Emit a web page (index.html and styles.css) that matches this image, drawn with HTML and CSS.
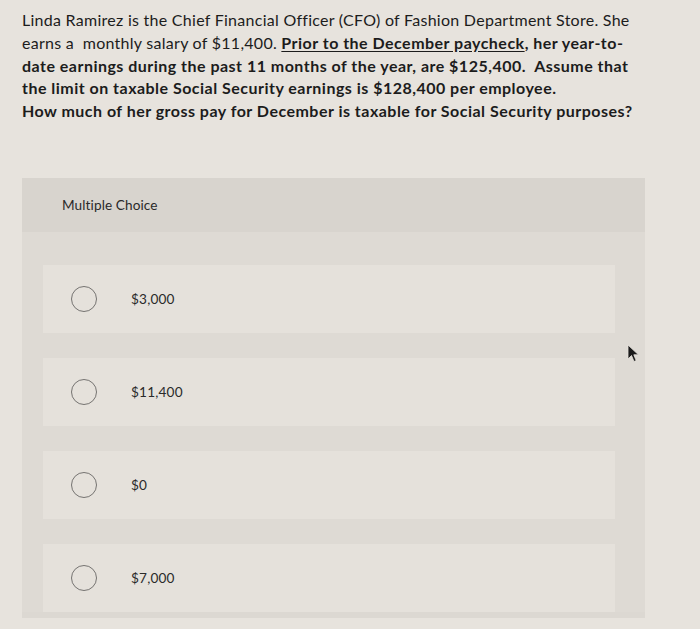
FILE: index.html
```html
<!DOCTYPE html>
<html>
<head>
<meta charset="utf-8">
<link rel="stylesheet" href="styles.css">
</head>
<body>
<div class="page">
  <p class="question">Linda Ramirez is the Chief Financial Officer (CFO) of Fashion Department Store. She<br>earns a&nbsp; monthly salary of $11,400. <b><u>Prior to the December paycheck</u>, her year-to-<br>date earnings during the past 11 months of the year, are $125,400.&nbsp; Assume that<br>the limit on taxable Social Security earnings is $128,400 per employee.<br>How much of her gross pay for December is taxable for Social Security purposes?</b></p>

  <div class="panel">
    <div class="panel-head">Multiple Choice</div>
    <div class="options">
      <div class="option"><span class="radio"></span><span class="label">$3,000</span></div>
      <div class="option"><span class="radio"></span><span class="label">$11,400</span></div>
      <div class="option"><span class="radio"></span><span class="label">$0</span></div>
      <div class="option"><span class="radio"></span><span class="label">$7,000</span></div>
    </div>
  </div>
</div>
<svg class="cursor" width="14" height="20" viewBox="0 0 14 20"><path d="M1 1 L1 15 L4.5 11.5 L7 17.5 L9.2 16.6 L6.8 10.8 L11.5 10.8 Z" fill="#1b1b1b" stroke="#e8e4de" stroke-width="0.8"/></svg>
</body>
</html>
```

FILE: styles.css
```css
html, body {
  margin: 0;
  padding: 0;
}
body {
  width: 700px;
  height: 629px;
  overflow: hidden;
  background: #e7e3dd;
  font-family: Lato, "Open Sans", sans-serif;
  color: #1f1f1f;
  position: relative;
}
.page {
  padding: 9px 0 0 22px;
}
.question {
  margin: 0;
  font-size: 16px;
  letter-spacing: 0.27px;
  line-height: 22.8px;
  color: #1c1c1c;
  white-space: nowrap;
}
.question b {
  font-weight: 700;
  letter-spacing: 0.48px;
}
.question u {
  text-underline-offset: 2px;
}
.panel {
  margin-top: 55px;
  width: 623px;
  background: #dcd8d2;
  padding-bottom: 6px;
}
.panel-head {
  height: 54px;
  box-sizing: border-box;
  padding: 19px 0 0 40px;
  font-size: 13.6px;
  letter-spacing: 0.1px;
  color: #2a2a2a;
  background: #d8d4ce;
}
.options {
  padding: 33px 30px 0 21px;
  display: flex;
  flex-direction: column;
  gap: 25px;
  background: #dedad4;
}
.option {
  height: 68px;
  background: #e5e1db;
  display: flex;
  align-items: center;
  padding-left: 28px;
}
.radio {
  width: 26px;
  height: 26px;
  border: 1.4px solid #757371;
  border-radius: 50%;
  box-sizing: border-box;
  flex: none;
}
.label {
  margin-left: 34px;
  font-size: 13.6px;
  letter-spacing: 0.2px;
  color: #2a2a2a;
}
.cursor {
  position: absolute;
  left: 627px;
  top: 344px;
}
```
